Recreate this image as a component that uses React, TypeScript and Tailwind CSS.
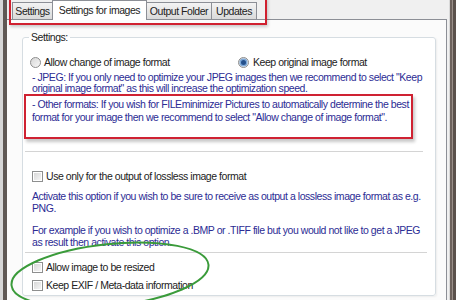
import React from 'react';

const Radio = ({ checked }: { checked?: boolean }) => (
  <span className="w-[11px] h-[11px] rounded-full border border-[#8d8d8d] bg-linear-to-br from-[#d6d6d6] to-[#f8f8f8] flex items-center justify-center shrink-0">
    {checked && <span className="w-[5px] h-[5px] rounded-full bg-[#24508c] ring-[1.5px] ring-[#7fa9d8]" />}
  </span>
);

const Check = () => (
  <span className="w-[11px] h-[11px] border border-[#8e8f8f] bg-white p-px shrink-0">
    <span className="block w-full h-full bg-linear-to-br from-[#d8d8d8] to-[#f5f5f5]" />
  </span>
);

const Sep = ({ w }: { w: string }) => (
  <div className={`${w} ml-[2px] h-[2px] border-t border-[#d4d4d4] border-b border-b-white`} />
);

export default function App() {
  return (
    <div className="relative w-[456px] h-[300px] flex overflow-hidden bg-[#f0f0f0] font-['Liberation_Sans',Arial,sans-serif] text-[10.5px] tracking-[-0.45px] leading-[12px] text-[#222]">
      {/* window frame, left */}
      <div className="w-[7px] shrink-0 flex">
        <div className="w-[3px] bg-[#d6d6d6]" />
        <div className="w-[4px] bg-[#5f5854]" />
      </div>

      <div className="flex-1 flex flex-col min-w-0">
        {/* tabs */}
        <div className="h-[19px] flex items-end pl-[5px] relative z-10">
          <div className="w-[41px] h-[17px] border border-b-0 border-[#8c8f96] bg-linear-to-b from-[#f3f3f3] to-[#dadada] flex items-center justify-center">Settings</div>
          <div className="w-[95px] h-[20px] -ml-px -mb-px border border-b-0 border-[#8c8f96] bg-white flex items-center justify-center pb-[2px]">Settings for images</div>
          <div className="w-[66px] h-[17px] -ml-px border border-b-0 border-[#8c8f96] bg-linear-to-b from-[#f3f3f3] to-[#dadada] flex items-center justify-center">Output Folder</div>
          <div className="w-[46px] h-[17px] -ml-px border border-b-0 border-[#8c8f96] bg-linear-to-b from-[#f3f3f3] to-[#dadada] flex items-center justify-center">Updates</div>
        </div>

        {/* tab page */}
        <div className="flex-1 border-t border-r border-[#8c8f96] bg-[#fbfbfb] mr-[2px] pl-[15px]">
          <fieldset className="mt-[11px] w-[414px] border border-[#d6dde2] rounded-[3px] bg-white pb-[4px] shadow-[1px_1px_2px_rgba(0,0,0,0.06)]">
            <legend className="ml-[6px] px-[2px] leading-[12px]">Settings:</legend>

            <div className="mt-[13px] pl-[7px] flex items-center h-[12px]">
              <div className="w-[208px] flex items-center gap-[3px]">
                <Radio />
                <span>Allow change of image format</span>
              </div>
              <div className="flex items-center gap-[4px]">
                <Radio checked />
                <span>Keep original image format</span>
              </div>
            </div>

            <div className="mt-[4px] ml-[9px] leading-[11px] text-[#2c2c94] whitespace-nowrap">
              - JPEG: If you only need to optimize your JPEG images then we recommend to select "Keep
              <br />
              original image format" as this will increase the optimization speed.
            </div>

            <div className="ml-[1px] w-[389px] border-2 border-[#cf2232] pt-[2px] pb-[13px] pl-[6px] leading-[13px] text-[#2c2c94] whitespace-nowrap shadow-[2px_3px_3px_rgba(0,0,0,0.22)]">
              - Other formats: If you wish for FILEminimizer Pictures to automatically determine the best
              <br />
              format for your image then we recommend to select "Allow change of image format".
            </div>

            <div className="mt-[12px]">
              <Sep w="w-[398px]" />
            </div>

            <div className="mt-[17px] ml-[9px] h-[12px] flex items-center gap-[3px]">
              <Check />
              <span>Use only for the output of lossless image format</span>
            </div>

            <div className="mt-[8px] ml-[9px] text-[#2c2c94] whitespace-nowrap">
              Activate this option if you wish to be sure to receive as output a lossless image format as e.g.
              <br />
              PNG.
            </div>

            <div className="mt-[10px] ml-[9px] text-[#2c2c94] whitespace-nowrap">
              For example if you wish to optimize a .BMP or .TIFF file but you would not like to get a JPEG
              <br />
              as result then activate this option.
            </div>

            <div className="mt-[4px]">
              <Sep w="w-[402px]" />
            </div>

            <div className="mt-[7px] ml-[9px] h-[12px] flex items-center gap-[3px]">
              <Check />
              <span>Allow image to be resized</span>
            </div>
            <div className="mt-[6px] ml-[9px] h-[12px] flex items-center gap-[3px]">
              <Check />
              <span>Keep EXIF / Meta-data information</span>
            </div>
          </fieldset>
        </div>
      </div>

      {/* window frame, right */}
      <div className="w-[7px] shrink-0 flex">
        <div className="w-[1px] bg-[#d9d9d9]" />
        <div className="w-[2px] bg-[#6d625d]" />
        <div className="w-[1px] bg-[#9a8f89]" />
        <div className="w-[3px] bg-[#5b514c]" />
      </div>

      {/* annotation: red frame round the tabs */}
      <div className="absolute left-[9px] top-[-3px] w-[258px] h-[28px] border-2 border-[#d0202f] shadow-[1px_2px_3px_rgba(0,0,0,0.2)] pointer-events-none" />

      {/* annotation: green ellipse */}
      <svg className="absolute left-0 top-0 pointer-events-none" width="456" height="300" viewBox="0 0 456 300">
        <ellipse cx="110" cy="275" rx="99" ry="31" transform="rotate(-6 110 275)" fill="none" stroke="#3a9b3a" strokeWidth="2" />
      </svg>
    </div>
  );
}
